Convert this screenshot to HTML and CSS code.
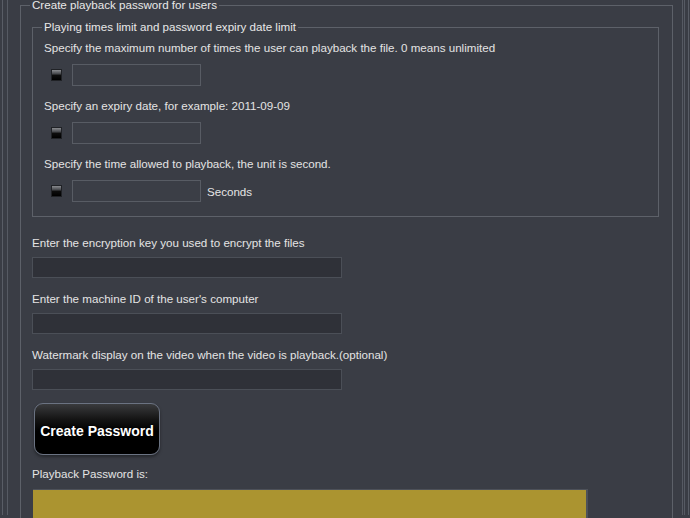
FILE: index.html
```html
<html>
	<head>
		<title>Create playback password</title>
		<link rel="stylesheet" href="styles.css">
	</head>
	<body>
		<div class="shell">
			<div class="panel">
				<fieldset class="outer">
					<legend>Create playback password for users</legend>
					<fieldset class="inner">
						<legend>Playing times limit and password expiry date limit</legend>
						<div class="label">Specify the maximum number of times the user can playback the file. 0 means unlimited</div>
						<div class="row">
							<span class="check"></span>
							<input type="text" class="small">
						</div>
						<div class="label">Specify an expiry date, for example: 2011-09-09</div>
						<div class="row">
							<span class="check"></span>
							<input type="text" class="small">
						</div>
						<div class="label">Specify the time allowed to playback, the unit is second.</div>
						<div class="row last">
							<span class="check"></span>
							<input type="text" class="small">
							<span class="unit">Seconds</span>
						</div>
					</fieldset>
					<div class="field first">
						<div class="label">Enter the encryption key you used to encrypt the files</div>
						<input type="text" class="wide">
					</div>
					<div class="field">
						<div class="label">Enter the machine ID of the user's computer</div>
						<input type="text" class="wide">
					</div>
					<div class="field">
						<div class="label">Watermark display on the video when the video is playback.(optional)</div>
						<input type="text" class="wide">
					</div>
					<button class="create">Create Password</button>
					<div class="label result">Playback Password is:</div>
					<div class="output"></div>
				</fieldset>
			</div>
		</div>
	</body>
</html>
```
FILE: styles.css
```css
body
{
	margin:0;
	background:#3a3d45;
	color:#e4e4e4;
	font-family:"Liberation Sans", Arial, sans-serif;
	font-size:11.6px;
	overflow:hidden;
	height:518px;
}
.shell
{
	margin:0 1px 0 2px;
	border-left:1px solid #595d66;
	border-right:1px solid #595d66;
	padding:0 3px 0 4px;
	height:518px;
}
.panel
{
	border-left:1px solid #565a63;
	border-right:3px double #565a63;
	padding:0 9px 0 12px;
	height:518px;
}
fieldset
{
	margin:0;
	border:1px solid #5d6169;
	min-width:0;
}
legend
{
	padding:0 2px;
	margin-left:-2px;
	line-height:16px;
	color:#e8e8e8;
}
.outer
{
	margin-top:-3px;
	padding:6px 13px 0 11px;
	border-bottom:none;
	height:540px;
}
.inner
{
	padding:5px 11px 14px 11px;
}
.label
{
	line-height:16px;
	margin-bottom:8px;
	white-space:nowrap;
}
.row
{
	display:flex;
	align-items:center;
	gap:10px;
	padding-left:7px;
	margin-bottom:12px;
}
.row.last
{
	margin-bottom:0;
}
.check
{
	width:9px;
	height:10px;
	border:1px solid #202226;
	background:linear-gradient(#8a8c90 0, #4a4c50 35%, #0c0c0c 55%, #000 100%);
}
input
{
	display:block;
	margin:0;
	padding:0;
	box-sizing:border-box;
	font:inherit;
	color:#e4e4e4;
}
.small
{
	width:129px;
	height:22px;
	background:#3b3e46;
	border:1px solid #585c64;
}
.unit
{
	margin-left:-4px;
}
.field
{
	margin-bottom:13px;
}
.field.first
{
	margin-top:18px;
}
.field .label
{
	margin-bottom:6px;
}
.wide
{
	width:310px;
	height:21px;
	background:#2f3138;
	border:1px solid #4b4f57;
}
.create
{
	display:block;
	margin:0 0 11px 2px;
	padding:3px 0 0 0;
	width:126px;
	height:52px;
	border:1px solid #6b7382;
	border-radius:9px;
	background:linear-gradient(#3a3b3d 0, #151515 30%, #000 55%, #000 100%);
	box-shadow:0 2px 3px #25272c;
	color:#fff;
	font-family:"Liberation Sans", Arial, sans-serif;
	font-weight:bold;
	font-size:14px;
	white-space:nowrap;
	text-shadow:0 0 2px #000;
}
.result
{
	margin-bottom:7px;
}
.output
{
	width:553px;
	height:60px;
	margin-left:1px;
	background:#ab9430;
	border-top:1px solid #4d5159;
	border-right:2px solid #4d5159;
}
```
